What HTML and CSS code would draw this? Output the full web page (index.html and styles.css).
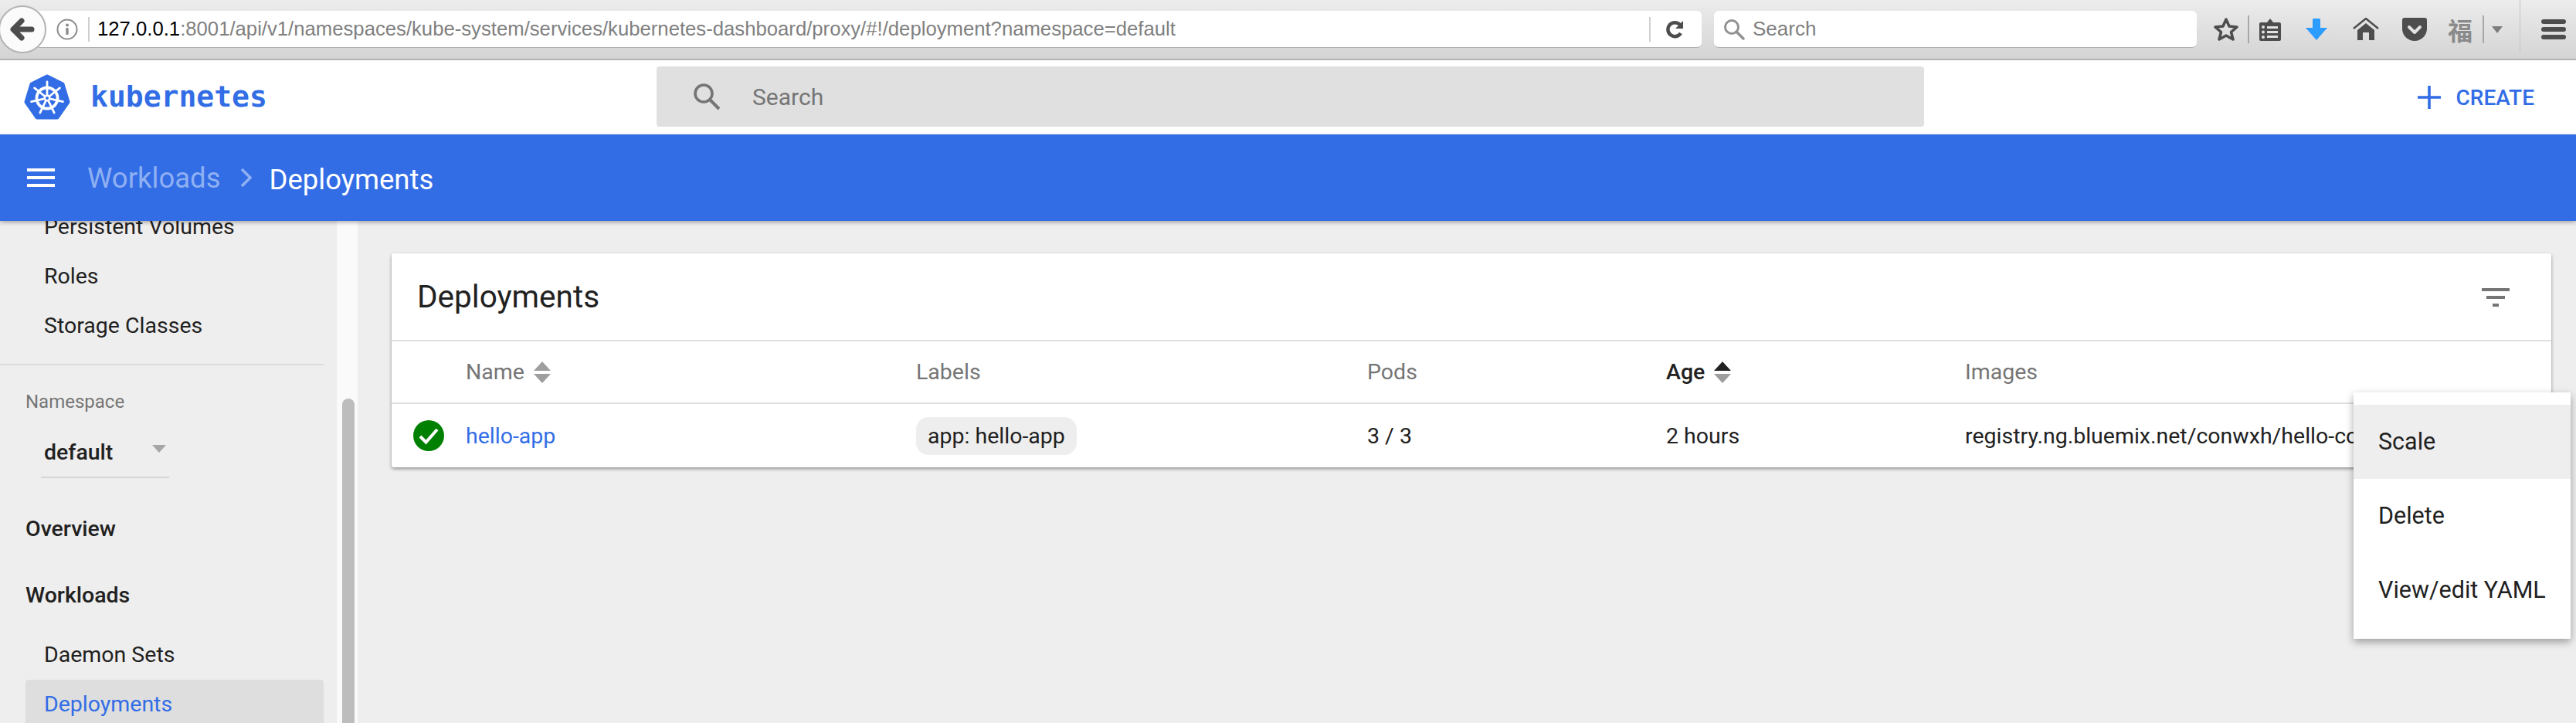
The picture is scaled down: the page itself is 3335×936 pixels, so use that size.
FILE: index.html
```html
<!DOCTYPE html>
<html lang="en">
<head>
  <meta charset="UTF-8" />
  <title>Deployments - Kubernetes Dashboard</title>
  <link rel="stylesheet" href="styles.css">
</head>
<body>
<div class="screen">

  <!-- browser chrome -->
  <div class="browser">
    <div class="back-btn">
      <svg width="32" height="32" viewBox="0 0 32 32"><path d="M15 5 4 16l11 11M6 16h22" fill="none" stroke="#4d4d4d" stroke-width="7" stroke-linecap="round" stroke-linejoin="round"/></svg>
    </div>
    <div class="url-bar">
      <svg class="info-icon" width="28" height="28" viewBox="0 0 28 28"><circle cx="14" cy="14" r="12.5" fill="none" stroke="#8c8c8c" stroke-width="2"/><rect x="12.3" y="12" width="3.4" height="9" rx="1" fill="#8c8c8c"/><circle cx="14" cy="8.4" r="2" fill="#8c8c8c"/></svg>
      <span class="bar-sep"></span>
      <div class="url-text"><span class="url-host">127.0.0.1</span>:8001/api/v1/namespaces/kube-system/services/kubernetes-dashboard/proxy/#!/deployment?namespace=default</div>
      <span class="bar-sep"></span>
      <svg class="reload-icon" width="24" height="26" viewBox="0 0 24 26"><path d="M19 18a9 9 0 1 1-1-11" fill="none" stroke="#4d4d4d" stroke-width="4.5"/><path d="M22 2v10H12z" fill="#4d4d4d"/></svg>
    </div>
    <div class="find-bar">
      <svg width="28" height="28" viewBox="0 0 28 28"><circle cx="11" cy="11" r="8.5" fill="none" stroke="#929292" stroke-width="3"/><path d="m17 17 9 9" stroke="#929292" stroke-width="3.5" stroke-linecap="round"/></svg>
      <span>Search</span>
    </div>
    <div class="tools">
      <svg class="tool-star" width="32" height="32" viewBox="0 0 32 32"><path d="M16 3l4 9 10 1-7.500 6.500L25 29l-9-5-9 5 2.500-9.500L2 13l10-1z" fill="none" stroke="#4d4d4d" stroke-width="3.500" stroke-linejoin="round"/></svg>
      <span class="tool-sep"></span>
      <svg class="tool-list" width="30" height="32" viewBox="0 0 30 32"><path d="M3 7h8l4-5 4 5h8a2 2 0 0 1 2 2v20a2 2 0 0 1-2 2H3a2 2 0 0 1-2-2V9a2 2 0 0 1 2-2z" fill="#4d4d4d"/><path d="M11 12h14v3H11zM11 18h14v3H11zM11 24h14v3H11z" fill="#e2e2e2"/><circle cx="6" cy="13" r="2" fill="#e2e2e2"/><circle cx="6" cy="19.500" r="2" fill="#e2e2e2"/><circle cx="6" cy="26" r="2" fill="#e2e2e2"/></svg>
      <svg class="tool-down" width="30" height="30" viewBox="0 0 30 30"><path d="M10 2a1.500 1.500 0 0 1 1.500-1h7A1.500 1.500 0 0 1 20 2v11h9L15 29 1 13h9z" fill="#2d9cff"/></svg>
      <svg class="tool-home" width="34" height="30" viewBox="0 0 34 30"><path d="M1 14 17 1l16 13" fill="none" stroke="#4d4d4d" stroke-width="2.500"/><path d="M17 7 28 16v13h-7V19h-8v10H6V16z" fill="#4d4d4d"/></svg>
      <svg class="tool-pocket" width="32" height="30" viewBox="0 0 32 30"><path d="M3 0h26a3 3 0 0 1 3 3v11a16 16 0 0 1-32 0V3a3 3 0 0 1 3-3z" fill="#4d4d4d"/><path d="m9 12 7 7 7-7" fill="none" stroke="#e2e2e2" stroke-width="4" stroke-linecap="round" stroke-linejoin="round"/></svg>
      <span class="tool-ext">福</span>
      <span class="tool-sep"></span>
      <span class="tool-caret"></span>
      <span class="tool-divider"></span>
      <span class="tool-burger"><i></i><i></i><i></i></span>
    </div>
  </div>

  <!-- dashboard top bar -->
  <div class="top-bar">
    <a class="brand">
      <svg width="60" height="60" viewBox="0 0 60 60">
        <path d="M30 3 50 13l7 23-14 20H17L3 36l7-23z" fill="#326de6" stroke="#326de6" stroke-width="5" stroke-linejoin="round"/>
        <g stroke="#fff" stroke-width="2.800" stroke-linecap="round">
          <line x1="30" y1="31" x2="30" y2="10"/>
          <line x1="30" y1="31" x2="30" y2="10" transform="rotate(51.430 30 31)"/>
          <line x1="30" y1="31" x2="30" y2="10" transform="rotate(102.860 30 31)"/>
          <line x1="30" y1="31" x2="30" y2="10" transform="rotate(154.290 30 31)"/>
          <line x1="30" y1="31" x2="30" y2="10" transform="rotate(205.710 30 31)"/>
          <line x1="30" y1="31" x2="30" y2="10" transform="rotate(257.140 30 31)"/>
          <line x1="30" y1="31" x2="30" y2="10" transform="rotate(308.570 30 31)"/>
        </g>
        <circle cx="30" cy="31" r="13.500" fill="none" stroke="#fff" stroke-width="3.800"/>
        <circle cx="30" cy="31" r="4.500" fill="#fff"/>
        <circle cx="30" cy="31" r="2" fill="#326de6"/>
      </svg>
      <span class="brand-name">kubernetes</span>
    </a>
    <div class="search">
      <svg width="38" height="38" viewBox="0 0 38 38"><circle cx="15" cy="15" r="11" fill="none" stroke="#757575" stroke-width="3.600"/><path d="m23 23 12 12" stroke="#757575" stroke-width="4"/></svg>
      <span class="search-text">Search</span>
    </div>
    <a class="create">
      <svg width="30" height="30" viewBox="0 0 30 30"><path d="M15 0v30M0 15h30" stroke="#326de6" stroke-width="3.600"/></svg>
      <span>CREATE</span>
    </a>
  </div>

  <!-- breadcrumb bar -->
  <div class="crumb-bar">
    <span class="burger"><i></i><i></i><i></i></span>
    <span class="crumb-parent">Workloads</span>
    <svg class="crumb-arrow" width="16" height="26" viewBox="0 0 16 26"><path d="m2 2 11 11L2 24" fill="none" stroke="#8fb0f2" stroke-width="3.500"/></svg>
    <span class="crumb-current">Deployments</span>
  </div>

  <div class="body">
    <nav class="sidebar">
      <a class="nav-item nav-first">Persistent Volumes</a>
      <a class="nav-item">Roles</a>
      <a class="nav-item">Storage Classes</a>
      <div class="nav-rule"></div>
      <div class="ns-label">Namespace</div>
      <div class="ns-select"><span>default</span><i class="ns-caret"></i></div>
      <a class="nav-head nav-overview">Overview</a>
      <a class="nav-head nav-workloads">Workloads</a>
      <a class="nav-item">Daemon Sets</a>
      <a class="nav-item nav-active">Deployments</a>
    </nav>
    <div class="scroll-track"><div class="scroll-thumb"></div></div>

    <main class="content">
      <section class="card">
        <div class="card-title">
          <h2>Deployments</h2>
          <span class="filter-icon"><i></i><i></i><i></i></span>
        </div>
        <div class="grid-row head-row">
          <span></span>
          <span class="th">Name <span class="sort"><i class="up"></i><i class="down"></i></span></span>
          <span class="th">Labels</span>
          <span class="th">Pods</span>
          <span class="th th-active">Age <span class="sort"><i class="up"></i><i class="down"></i></span></span>
          <span class="th">Images</span>
        </div>
        <div class="grid-row data-row">
          <svg class="status" width="40" height="40" viewBox="0 0 40 40"><circle cx="20" cy="20" r="20" fill="#008000"/><path d="m9 21 7.500 7.500L31 12" fill="none" stroke="#fff" stroke-width="4"/></svg>
          <a class="link">hello-app</a>
          <span><span class="chip">app: hello-app</span></span>
          <span>3 / 3</span>
          <span>2 hours</span>
          <span class="image-cell">registry.ng.bluemix.net/conwxh/hello-co</span>
        </div>
      </section>
    </main>
  </div>

  <!-- row action menu -->
  <div class="menu">
    <div class="menu-item menu-hover">Scale</div>
    <div class="menu-item">Delete</div>
    <div class="menu-item">View/edit YAML</div>
  </div>

</div>
</body>
</html>
```

FILE: styles.css
```css
* {
  box-sizing: border-box;
}
html, body {
  margin: 0;
  padding: 0;
}
body {
  font-family: Roboto, sans-serif;
  color: #212121;
  background-color: #eeeeee;
}
a {
  text-decoration: none;
  color: inherit;
}
i {
  display: block;
}
.screen {
  position: relative;
  width: 3335px;
  height: 936px;
  overflow: hidden;
  display: flex;
  flex-direction: column;
}

/* browser chrome */
.browser {
  position: relative;
  flex: none;
  height: 78px;
  display: flex;
  padding: 14px 0 0 50px;
  background: linear-gradient(#ececec, #d4d4d4);
  border-bottom: 2px solid #b4b4b4;
  font-family: "Liberation Sans", Arial, sans-serif;
}
.back-btn {
  position: absolute;
  left: -2px;
  top: 7px;
  width: 62px;
  height: 62px;
  border-radius: 50%;
  background-color: #fbfbfb;
  border: 2px solid #b3b3b3;
  display: flex;
  align-items: center;
  justify-content: center;
}
.url-bar {
  width: 2153px;
  height: 48px;
  display: flex;
  align-items: center;
  background-color: #fff;
  border-bottom: 1px solid #b0b0b0;
  border-radius: 0 6px 6px 0;
  padding-left: 23px;
}
.info-icon {
  flex: none;
}
.bar-sep {
  flex: none;
  width: 2px;
  height: 32px;
  background-color: #d0d0d0;
  margin-left: 13px;
}
.url-text {
  flex: 1;
  margin-left: 10px;
  font-size: 25.7px;
  color: #808080;
  white-space: nowrap;
}
.url-host {
  color: #000;
}
.reload-icon {
  margin: 0 22px 0 20px;
}
.find-bar {
  width: 625px;
  height: 48px;
  margin-left: 16px;
  display: flex;
  align-items: center;
  gap: 10px;
  padding-left: 12px;
  background-color: #fff;
  border-bottom: 1px solid #b0b0b0;
  border-radius: 6px;
  font-size: 26px;
  color: #808080;
}
.tools {
  flex: 1;
  height: 48px;
  display: flex;
  align-items: center;
  position: relative;
}
.tool-star {
  margin-left: 22px;
}
.tool-sep {
  width: 2px;
  height: 36px;
  background-color: #a8a8a8;
}
.tool-star + .tool-sep {
  margin-left: 12px;
}
.tool-list {
  margin-left: 12px;
}
.tool-down {
  margin-left: 30px;
}
.tool-home {
  margin-left: 32px;
}
.tool-pocket {
  margin-left: 30px;
}
.tool-ext {
  margin-left: 27px;
  width: 34px;
  font-family: "Noto Sans CJK SC", sans-serif;
  font-size: 32px;
  font-weight: 700;
  line-height: 36px;
  color: #8a8a8a;
}
.tool-ext + .tool-sep {
  margin-left: 11px;
}
.tool-caret {
  margin-left: 10px;
  width: 0;
  height: 0;
  border-left: 7px solid transparent;
  border-right: 7px solid transparent;
  border-top: 9px solid #7d7d7d;
}
.tool-divider {
  width: 1px;
  height: 76px;
  margin: -14px 0 0 22px;
  background-color: #c4c4c4;
}
.tool-burger {
  margin-left: 27px;
  width: 32px;
  display: flex;
  flex-direction: column;
  gap: 4px;
}
.tool-burger i {
  height: 6px;
  border-radius: 3px;
  background-color: #4d4d4d;
}

/* dashboard top bar */
.top-bar {
  flex: none;
  height: 96px;
  display: flex;
  align-items: center;
  background-color: #fff;
}
.brand {
  flex: none;
  width: 850px;
  padding-left: 31px;
  display: flex;
  align-items: center;
  gap: 26px;
}
.brand-name {
  font-family: "DejaVu Sans Mono", monospace;
  font-weight: 700;
  font-size: 38px;
  color: #326de6;
  line-height: 1;
  margin-top: -2px;
}
.search {
  flex: none;
  width: 1641px;
  height: 78px;
  margin-top: -3px;
  display: flex;
  align-items: center;
  gap: 40px;
  padding-left: 46px;
  background-color: #e0e0e0;
  border-radius: 4px;
  font-size: 30px;
  color: #757575;
}
.search-text {
  margin-top: 2px;
}
.create {
  flex: 1;
  display: flex;
  justify-content: flex-end;
  align-items: center;
  gap: 20px;
  padding-right: 54px;
  font-size: 28px;
  font-weight: 500;
  color: #326de6;
}

/* breadcrumb bar */
.crumb-bar {
  position: relative;
  z-index: 2;
  flex: none;
  height: 112px;
  display: flex;
  align-items: center;
  padding-left: 35px;
  background-color: #326de6;
  box-shadow: 0 2px 5px rgba(0, 0, 0, 0.3);
  color: #fff;
}
.burger {
  width: 36px;
  display: flex;
  flex-direction: column;
  gap: 6px;
}
.burger i {
  height: 4px;
  background-color: #fff;
}
.crumb-parent {
  margin-left: 42px;
  font-size: 36.500px;
  color: #8fb0f2;
  margin-top: 0;
}
.crumb-arrow {
  margin-left: 26px;
}
.crumb-current {
  margin-left: 21px;
  font-size: 36.500px;
  margin-top: 5px;
}

/* sidebar */
.body {
  flex: 1;
  display: flex;
  min-height: 0;
}
.sidebar {
  flex: none;
  width: 436px;
  padding-right: 17px;
  font-size: 28.500px;
}
.nav-item {
  display: block;
  height: 64px;
  line-height: 64px;
  padding-left: 57px;
}
.nav-first {
  margin-top: -24px;
}
.nav-rule {
  height: 2px;
  margin-top: 17px;
  background-color: #dcdcdc;
}
.ns-label {
  margin-top: 32px;
  padding-left: 33px;
  font-size: 24px;
  line-height: 30px;
  color: #757575;
}
.ns-select {
  width: 166px;
  height: 66px;
  margin: 18px 0 0 53px;
  padding-left: 4px;
  display: flex;
  align-items: center;
  justify-content: space-between;
  border-bottom: 2px solid #d6d6d6;
  font-weight: 500;
}
.ns-caret {
  width: 0;
  height: 0;
  margin-right: 4px;
  margin-top: -8px;
  border-left: 9px solid transparent;
  border-right: 9px solid transparent;
  border-top: 10px solid #a6a6a6;
}
.nav-head {
  display: block;
  padding-left: 33px;
  line-height: 40px;
  font-weight: 500;
}
.nav-overview {
  margin-top: 46px;
}
.nav-workloads {
  margin-top: 46px;
  margin-bottom: 25px;
}
.nav-active {
  margin: 0 0 0 33px;
  padding-left: 24px;
  background-color: #dedede;
  border-radius: 4px;
  color: #326de6;
  height: 80px;
}
.scroll-track {
  flex: none;
  width: 27px;
  background-color: #fafafa;
  padding: 230px 4px 0 7px;
}
.scroll-thumb {
  height: 500px;
  border-radius: 8px;
  background-color: #bdbdbd;
}

/* deployments card */
.content {
  flex: 1;
  padding: 42px 32px 0 44px;
}
.card {
  background-color: #fff;
  border-radius: 3px;
  box-shadow: 0 2px 4px rgba(0, 0, 0, 0.4);
}
.card-title {
  height: 114px;
  display: flex;
  align-items: center;
  justify-content: space-between;
  padding: 0 54px 0 33px;
  border-bottom: 2px solid #e0e0e0;
}
.card-title h2 {
  margin: 0;
  font-size: 40.500px;
  font-weight: 400;
}
.filter-icon {
  display: flex;
  flex-direction: column;
  align-items: center;
  gap: 6px;
  width: 36px;
  margin-bottom: -2px;
}
.filter-icon i {
  height: 4px;
  background-color: #757575;
}
.filter-icon i:nth-child(1) {
  width: 36px;
}
.filter-icon i:nth-child(2) {
  width: 24px;
}
.filter-icon i:nth-child(3) {
  width: 8px;
}
.grid-row {
  display: grid;
  grid-template-columns: 96px 583px 584px 387px 387px 1fr;
  align-items: center;
  font-size: 28.500px;
  white-space: nowrap;
}
.head-row {
  height: 81px;
  border-bottom: 2px solid #e0e0e0;
}
.data-row {
  height: 82px;
}
.status {
  margin-left: 28px;
}
.th {
  display: flex;
  align-items: center;
  gap: 12px;
  color: #757575;
}
.th-active {
  color: #212121;
  font-weight: 500;
}
.sort i {
  width: 0;
  height: 0;
  border-left: 11px solid transparent;
  border-right: 11px solid transparent;
}
.sort .up {
  border-bottom: 12px solid #9e9e9e;
  margin-bottom: 4px;
}
.sort .down {
  border-top: 12px solid #9e9e9e;
}
.th-active .sort .up {
  border-bottom-color: #212121;
}
.link {
  color: #326de6;
}
.chip {
  display: inline-block;
  height: 49px;
  line-height: 49px;
  padding: 0 15px;
  border-radius: 16px;
  background-color: #eeeeee;
}
.image-cell {
  overflow: hidden;
}

/* row action menu */
.menu {
  position: absolute;
  left: 3047px;
  top: 508px;
  width: 281px;
  padding: 16px 0 15px;
  background-color: #fff;
  box-shadow: 0 4px 10px rgba(0, 0, 0, 0.35);
  z-index: 3;
}
.menu-item {
  height: 96px;
  line-height: 96px;
  padding-left: 32px;
  font-size: 30.500px;
}
.menu-hover {
  background-color: #eeeeee;
}
```
